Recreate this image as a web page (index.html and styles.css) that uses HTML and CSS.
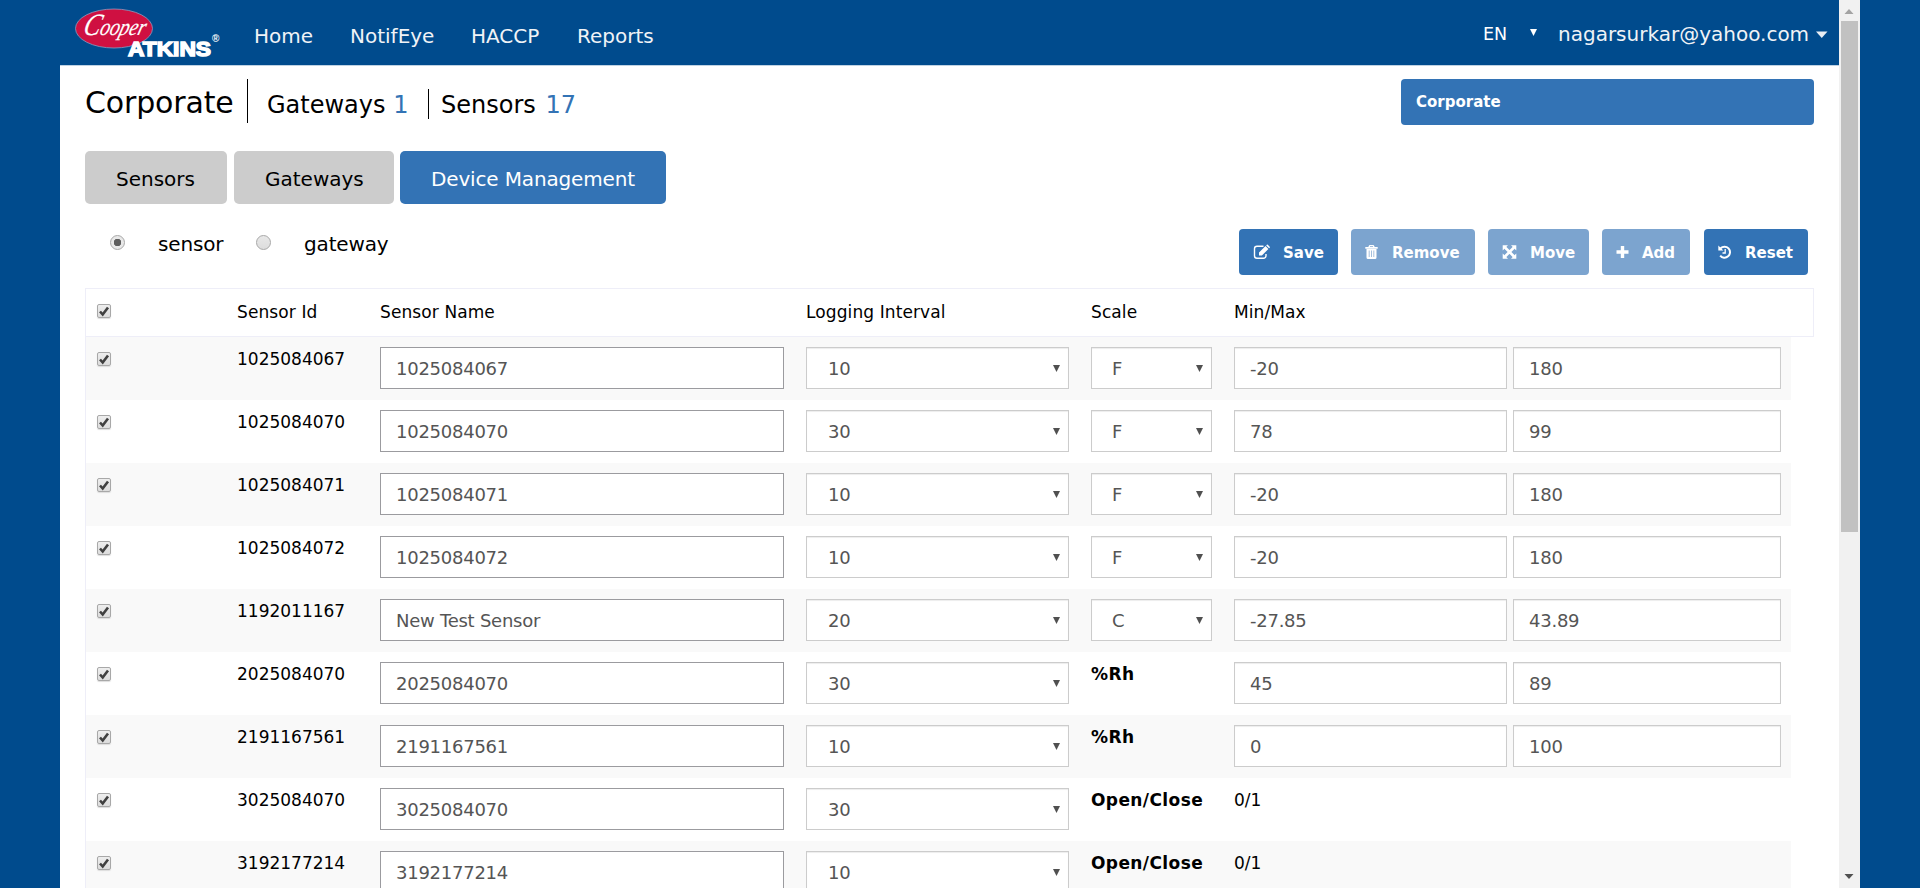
FILE: index.html
```
<!DOCTYPE html>
<html lang="en">
<head>
<meta charset="utf-8">
<title>Device Management</title>
<link rel="stylesheet" href="styles.css">
</head>
<body>
<div class="viewport">
  <div class="page">
    <header class="topbar">
      <svg class="logo" width="150" height="60" viewBox="0 0 150 60">
        <ellipse cx="39" cy="28.5" rx="38.5" ry="19.5" fill="#cf1041" stroke="#8d9cc0" stroke-width=".8"/>
        <text class="logo-script" x="17" y="35" textLength="62" lengthAdjust="spacingAndGlyphs" transform="skewX(-16)"><tspan class="logo-cap">C</tspan>ooper</text>
        <text class="logo-block" x="53" y="56" textLength="83" lengthAdjust="spacingAndGlyphs">ATKINS</text>
        <text class="logo-reg" x="137" y="42">®</text>
      </svg>
      <nav class="nav"><a class="n1">Home</a><a class="n2">NotifEye</a><a class="n3">HACCP</a><a class="n4">Reports</a></nav>
      <div class="account">
        <span class="lang">EN</span>
        <svg class="lang-arrow" width="8" height="8"><path d="M0 0h7L3.500 7z" fill="#fff"/></svg>
        <span class="email">nagarsurkar@yahoo.com</span>
        <svg class="caret" width="12" height="8"><path d="M0 .5h11.5L5.750 7z" fill="#e9eef4"/></svg>
      </div>
    </header>
    <main class="content">
      <section class="summary">
        <h1 class="title">Corporate</h1>
        <div class="stat gateways">Gateways <b>1</b></div>
        <div class="stat sensors">Sensors <b>17</b></div>
        <button class="btn location">Corporate</button>
      </section>
      <div class="tabs"><button class="tab t1">Sensors</button><button class="tab t2">Gateways</button><button class="tab t3 active">Device Management</button></div>
      <section class="toolbar">
        <div class="radios">
          <span class="radio on"></span><span class="rl r1">sensor</span>
          <span class="radio"></span><span class="rl r2">gateway</span>
        </div>
        <div class="actions">
          <button class="btn a1"><svg width="17" height="16" viewBox="0 0 17 16"><path d="M10.500 2.200H4A2.500 2.500 0 0 0 1.500 4.700v7A2.500 2.500 0 0 0 4 14.200h6.500a2.500 2.500 0 0 0 2.500-2.500V10" fill="none" stroke="#fff" stroke-width="1.400"/><path d="M6 11.500V8.600l6.500-6.500 2.900 2.900L8.900 11.500zM13.200 1.400l.6-.6q.5-.4 1 0l1.900 1.900q.4.500 0 1l-.6.600z" fill="#fff"/></svg><span>Save</span></button>
          <button class="btn dim a2"><svg width="13" height="16" viewBox="0 0 13 16"><path d="M1.500 5h10v8.500q0 1.500-1.500 1.500H3q-1.500 0-1.500-1.500zM.3 3h3L4 1.400q.2-.4.700-.4h3.600q.5 0 .700.400L9.700 3h3v1.700H.3z" fill="#fff"/><path d="M4.200 6.500v6.500M6.500 6.500v6.500M8.800 6.500v6.500M5 2.500h3" stroke="#7ca4cf" stroke-width=".7"/></svg><span>Remove</span></button>
          <button class="btn dim a3"><svg width="15" height="16" viewBox="0 0 15 16"><path d="M3 3.500l9 9M12 3.500l-9 9" stroke="#fff" stroke-width="2.600"/><path d="M.7 1.300h5.300l-5.300 5.300zM14.300 1.300H9l5.300 5.300zM.7 14.700h5.300L.7 9.400zM14.300 14.700H9l5.300-5.300z" fill="#fff"/></svg><span>Move</span></button>
          <button class="btn dim a4"><svg width="13" height="16" viewBox="0 0 13 16"><path d="M6.500 2v12M.5 8h12" stroke="#fff" stroke-width="3.400"/></svg><span>Add</span></button>
          <button class="btn a5"><svg width="14" height="16" viewBox="0 0 14 16"><path d="M2.600 4.300A5.500 5.500 0 1 1 2.200 11.600" fill="none" stroke="#fff" stroke-width="2"/><path d="M.3 1.500v5h5z" fill="#fff"/><path d="M7.200 5v4H4.500" fill="none" stroke="#fff" stroke-width="1.300"/></svg><span>Reset</span></button>
        </div>
      </section>
      <section class="table">
        <div class="thead"><i class="check"></i><span>Sensor Id</span><span>Sensor Name</span><span>Logging Interval</span><span>Scale</span><span>Min/Max</span></div>
        <div id="rows"></div>
      </section>
    </main>
  </div>
  <div class="scrollbar">
    <svg width="21" height="21"><path d="M5.500 14h9L10 9z" fill="#a3a3a3"/></svg>
    <div class="thumb"></div>
    <svg class="down" width="21" height="21"><path d="M5.500 7h9L10 12z" fill="#505050"/></svg>
  </div>
</div>
<script src="rows.js"></script>
</body>
</html>
```
FILE: styles.css
```
* { box-sizing: border-box; }
body { margin: 0; background: #004b8d; font-family: Verdana, "DejaVu Sans", sans-serif; color: #000; overflow: hidden; }
.viewport { height: 888px; padding: 0 60px; display: flex; overflow: hidden; }
.page { width: 1779px; height: 888px; flex: none; overflow: hidden; background: #fff; }
.scrollbar { width: 21px; height: 888px; flex: none; background: #f1f1f1; display: flex; flex-direction: column; }
.scrollbar svg { flex: none; display: block; }
.thumb { height: 511px; margin: 0 2px; background: #c1c1c1; }
.down { margin-top: auto; }
.topbar { height: 66px; background: #004b8d; border-bottom: 1px solid #bfd2e3; display: flex; color: #f0f3f7; }
.logo { margin-left: 15px; flex: none; }
.logo-script { font: italic 24px "Liberation Serif", serif; fill: #fff; stroke: #fff; stroke-width: .2px; }
.logo-cap { font-size: 31px; }
.logo-block { font: bold 21px "Liberation Sans", sans-serif; fill: #fff; stroke: #fff; stroke-width: 1.5px; }
.logo-reg { font: bold 10px "Liberation Sans", sans-serif; fill: #fff; }
.nav { display: flex; margin-left: 29px; font-size: 20px; line-height: 73px; }
.nav a { white-space: nowrap; }
.n1 { width: 96px; }
.n2 { width: 121px; }
.n3 { width: 106px; }
.account { margin-left: auto; display: flex; font-size: 20px; line-height: 69px; padding-right: 11px; }
.lang { font-size: 17.5px; width: 47px; color: #fff; }
.lang-arrow { margin: 29px 20px 0 0; }
.email { width: 251px; white-space: nowrap; }
.caret { margin: 31px 0 0 7px; }
.content { padding-left: 25px; }
.summary { height: 85px; display: flex; align-items: flex-start; padding-top: 13px; width: 1729px; }
.title { margin: 0; width: 163px; height: 44px; font-size: 30px; font-weight: 400; line-height: 47px; letter-spacing: -.15px; border-right: 1px solid #000; white-space: nowrap; }
.stat { font-size: 24px; line-height: 32px; height: 30px; margin-top: 10px; white-space: nowrap; }
.stat b { font-weight: 400; color: #3373b5; }
.gateways { margin-left: 19px; width: 162px; border-right: 1px solid #000; }
.sensors { margin-left: 12px; }
.sensors b { margin-left: 2px; }
button { font-family: inherit; border: 0; padding: 0; margin: 0; white-space: nowrap; }
.btn { height: 46px; background: #3373b5; color: #fff; font-weight: 700; font-size: 15px; border-radius: 4px; }
.location { margin-left: auto; width: 413px; text-align: left; padding-left: 15px; }
.tabs { display: flex; height: 53px; }
.tab { font-size: 20px; border-radius: 5px; background: #ccc; color: #000; text-align: left; padding: 2px 0 0 31px; }
.tab.active { background: #3373b5; color: #fff; letter-spacing: -.15px; }
.t1 { width: 142px; margin-right: 7px; }
.t2 { width: 160px; margin-right: 6px; }
.t3 { width: 266px; }
.toolbar { height: 84px; display: flex; }
.radios { display: flex; width: 1154px; padding-left: 25px; font-size: 20px; line-height: 24px; }
.radio { width: 15px; height: 15px; margin: 31px 33px 0 0; border: 1px solid #a8a8a8; border-radius: 50%; background: linear-gradient(#e8e8e8, #ddd); }
.radio.on { background: radial-gradient(circle, #5e5e5e 0 3.500px, #e8e8e8 4px); }
.rl { margin-top: 28px; letter-spacing: -.15px; }
.r1 { width: 98px; }
.actions { display: flex; padding-top: 25px; }
.actions .btn { display: flex; align-items: center; padding: 1px 0 0 14px; margin-right: 13px; }
.actions svg { flex: none; margin: -1px 13px 0 0; }
.actions .dim { background: #7ca4cf; }
.a1 { width: 99px; }
.a2 { width: 124px; }
.actions .a2 svg { margin-right: 14px; }
.a3 { width: 101px; }
.a4 { width: 88px; }
.a5 { width: 104px; margin-left: 1px; }
.table { border-left: 1px solid #eeeef8; font-size: 17px; }
.thead, .row { display: grid; grid-template-columns: 140px 143px 426px 285px 143px 274px 273px; padding-left: 11px; }
.thead { width: 1728px; height: 49px; border: 1px solid #eeeef8; border-left: 0; line-height: 46px; letter-spacing: .1px; }
.thead span { white-space: nowrap; }
.row { height: 63px; width: 1705px; padding-top: 10px; }
.row.odd { background: #f9f9f9; }
.id, .kind { line-height: 24px; }
.kind.bold { font-weight: 700; letter-spacing: .4px; }
.check { width: 14px; height: 14px; border: 1px solid #a8a8a8; border-radius: 2px; background: linear-gradient(#eee, #dcdcdc); box-shadow: 0 1px 1px #ddd; display: block; margin-top: 5px; }
.thead .check { margin-top: 15px; }
.check svg { display: block; }
.field { height: 42px; border: 1px solid #ccc; background: #fff; color: #555; font-size: 18px; line-height: 42px; letter-spacing: -.25px; box-shadow: inset 0 1px 1px rgba(0,0,0,.075); display: flex; justify-content: space-between; padding: 0 8px 0 15px; }
.name { width: 404px; border-color: #9b9b9f; box-shadow: none; }
.interval { width: 263px; padding-left: 21px; }
.scale { width: 121px; padding-left: 20px; }
.min { width: 273px; }
.max { width: 268px; margin-left: 5px; }
.field svg { margin-top: 17px; }
```
FILE: rows.js
```
const rows = [
  ["1025084067", "1025084067", 10, "F", "-20", "180"],
  ["1025084070", "1025084070", 30, "F", "78", "99"],
  ["1025084071", "1025084071", 10, "F", "-20", "180"],
  ["1025084072", "1025084072", 10, "F", "-20", "180"],
  ["1192011167", "New Test Sensor", 20, "C", "-27.85", "43.89"],
  ["2025084070", "2025084070", 30, "%Rh", "45", "89"],
  ["2191167561", "2191167561", 10, "%Rh", "0", "100"],
  ["3025084070", "3025084070", 30, "Open/Close", "0/1"],
  ["3192177214", "3192177214", 10, "Open/Close", "0/1"]
];
const tick = '<svg width="12" height="12"><path d="M2 6.500l2.700 3L10 2.500" fill="none" stroke="#404040" stroke-width="2.600"/></svg>';
const arrow = '<svg width="7" height="8"><path d="M0 0h7L3.500 7z" fill="#505050"/></svg>';
document.querySelector(".thead .check").innerHTML = tick;
document.getElementById("rows").innerHTML = rows.map(([id, name, interval, scale, min, max], i) => `
  <div class="row ${i % 2 ? "" : "odd"}">
    <i class="check">${tick}</i><span class="id">${id}</span>
    <div class="field name">${name}</div>
    <div class="field interval">${interval}${arrow}</div>
    ${scale.length === 1 ? `<div class="field scale">${scale}${arrow}</div>` : `<span class="kind bold">${scale}</span>`}
    ${max ? `<div class="field min">${min}</div><div class="field max">${max}</div>` : `<span class="kind">${min}</span>`}
  </div>`).join("");
```
